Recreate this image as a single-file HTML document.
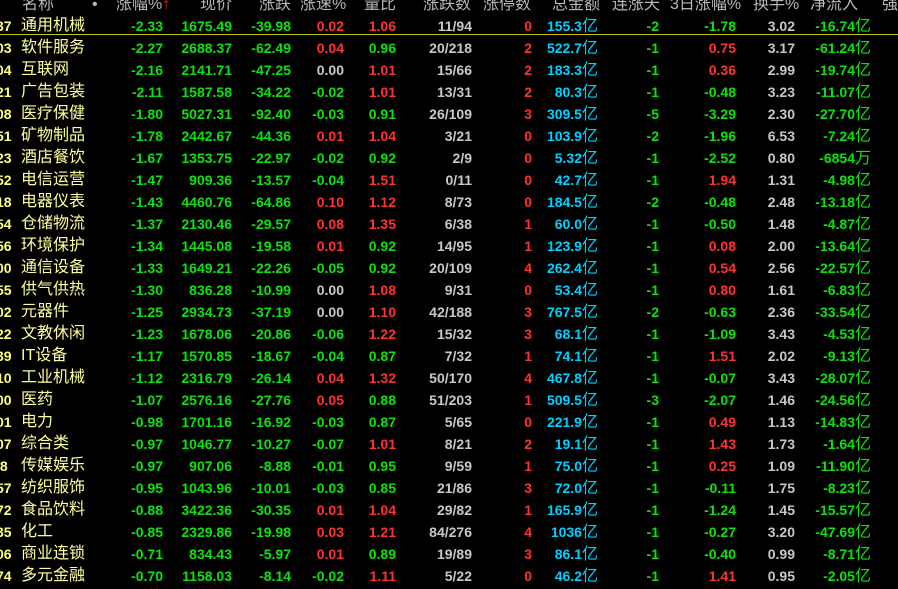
<!DOCTYPE html><html><head><meta charset="utf-8"><style>
body{margin:0;background:#000;width:898px;height:589px;overflow:hidden;position:relative;font-family:"Liberation Sans","Noto Sans CJK SC",sans-serif;font-size:14px}
.r{position:absolute;left:0;width:898px;height:22px;line-height:22px;margin-top:2px;font-weight:bold}
.r span{position:absolute;white-space:nowrap}
.a{left:-4px;color:#ffff80;font-weight:bold}
.n{left:21px;color:#ffff99;font-size:16px;font-weight:normal}
.b{right:735px;color:#10e010}.c{right:666px;color:#10e010}.d{right:607px;color:#10e010}
.e{right:554px}.f{right:502px}.g{right:426px;color:#c8c8c8}.h{right:366px;color:#ff3232}
.i{right:300px;color:#00d0ff}.j{right:239px;color:#10e010}.k{right:162px}.l{right:103px;color:#c8c8c8}.m{right:27px;color:#10e010}
.i i,.m i{font-style:normal;font-size:16px;font-weight:normal}
.R{color:#ff3232!important}.G{color:#10e010!important}.W{color:#c8c8c8!important}
.hd{position:absolute;top:-6px;color:#b8b8b8;font-size:16px;line-height:22px;white-space:nowrap}
</style></head><body>
<span class="hd" style="left:22px">名称</span><span class="hd" style="left:92px">•</span>
<span class="hd" style="left:116px">涨幅%<span style="color:#ff2020">↑</span></span>
<span class="hd" style="left:200px">现价</span><span class="hd" style="left:259px">涨跌</span>
<span class="hd" style="left:300px">涨速%</span><span class="hd" style="left:364px">量比</span>
<span class="hd" style="left:423px">涨跌数</span><span class="hd" style="left:483px">涨停数</span>
<span class="hd" style="left:552px">总金额</span><span class="hd" style="left:612px">连涨天</span>
<span class="hd" style="left:670px">3日涨幅%</span><span class="hd" style="left:753px">换手%</span>
<span class="hd" style="left:810px">净流入</span><span class="hd" style="left:882px">强</span>
<div style="position:absolute;top:34px;left:0;width:898px;height:1px;background:#c8c800"></div>

<div class="r" style="top:13px"><span class="a">37</span><span class="n">通用机械</span><span class="b">-2.33</span><span class="c">1675.49</span><span class="d">-39.98</span><span class="e R">0.02</span><span class="f R">1.06</span><span class="g">11/94</span><span class="h">0</span><span class="i">155.3<i>亿</i></span><span class="j">-2</span><span class="k G">-1.78</span><span class="l">3.02</span><span class="m">-16.74<i>亿</i></span></div>
<div class="r" style="top:35px"><span class="a">03</span><span class="n">软件服务</span><span class="b">-2.27</span><span class="c">2688.37</span><span class="d">-62.49</span><span class="e R">0.04</span><span class="f G">0.96</span><span class="g">20/218</span><span class="h">2</span><span class="i">522.7<i>亿</i></span><span class="j">-1</span><span class="k R">0.75</span><span class="l">3.17</span><span class="m">-61.24<i>亿</i></span></div>
<div class="r" style="top:57px"><span class="a">04</span><span class="n">互联网</span><span class="b">-2.16</span><span class="c">2141.71</span><span class="d">-47.25</span><span class="e W">0.00</span><span class="f R">1.01</span><span class="g">15/66</span><span class="h">2</span><span class="i">183.3<i>亿</i></span><span class="j">-1</span><span class="k R">0.36</span><span class="l">2.99</span><span class="m">-19.74<i>亿</i></span></div>
<div class="r" style="top:79px"><span class="a">21</span><span class="n">广告包装</span><span class="b">-2.11</span><span class="c">1587.58</span><span class="d">-34.22</span><span class="e G">-0.02</span><span class="f R">1.01</span><span class="g">13/31</span><span class="h">2</span><span class="i">80.3<i>亿</i></span><span class="j">-1</span><span class="k G">-0.48</span><span class="l">3.23</span><span class="m">-11.07<i>亿</i></span></div>
<div class="r" style="top:101px"><span class="a">08</span><span class="n">医疗保健</span><span class="b">-1.80</span><span class="c">5027.31</span><span class="d">-92.40</span><span class="e G">-0.03</span><span class="f G">0.91</span><span class="g">26/109</span><span class="h">3</span><span class="i">309.5<i>亿</i></span><span class="j">-5</span><span class="k G">-3.29</span><span class="l">2.30</span><span class="m">-27.70<i>亿</i></span></div>
<div class="r" style="top:123px"><span class="a">51</span><span class="n">矿物制品</span><span class="b">-1.78</span><span class="c">2442.67</span><span class="d">-44.36</span><span class="e R">0.01</span><span class="f R">1.04</span><span class="g">3/21</span><span class="h">0</span><span class="i">103.9<i>亿</i></span><span class="j">-2</span><span class="k G">-1.96</span><span class="l">6.53</span><span class="m">-7.24<i>亿</i></span></div>
<div class="r" style="top:145px"><span class="a">23</span><span class="n">酒店餐饮</span><span class="b">-1.67</span><span class="c">1353.75</span><span class="d">-22.97</span><span class="e G">-0.02</span><span class="f G">0.92</span><span class="g">2/9</span><span class="h">0</span><span class="i">5.32<i>亿</i></span><span class="j">-1</span><span class="k G">-2.52</span><span class="l">0.80</span><span class="m">-6854<i>万</i></span></div>
<div class="r" style="top:167px"><span class="a">52</span><span class="n">电信运营</span><span class="b">-1.47</span><span class="c">909.36</span><span class="d">-13.57</span><span class="e G">-0.04</span><span class="f R">1.51</span><span class="g">0/11</span><span class="h">0</span><span class="i">42.7<i>亿</i></span><span class="j">-1</span><span class="k R">1.94</span><span class="l">1.31</span><span class="m">-4.98<i>亿</i></span></div>
<div class="r" style="top:189px"><span class="a">18</span><span class="n">电器仪表</span><span class="b">-1.43</span><span class="c">4460.76</span><span class="d">-64.86</span><span class="e R">0.10</span><span class="f R">1.12</span><span class="g">8/73</span><span class="h">0</span><span class="i">184.5<i>亿</i></span><span class="j">-2</span><span class="k G">-0.48</span><span class="l">2.48</span><span class="m">-13.18<i>亿</i></span></div>
<div class="r" style="top:211px"><span class="a">54</span><span class="n">仓储物流</span><span class="b">-1.37</span><span class="c">2130.46</span><span class="d">-29.57</span><span class="e R">0.08</span><span class="f R">1.35</span><span class="g">6/38</span><span class="h">1</span><span class="i">60.0<i>亿</i></span><span class="j">-1</span><span class="k G">-0.50</span><span class="l">1.48</span><span class="m">-4.87<i>亿</i></span></div>
<div class="r" style="top:233px"><span class="a">56</span><span class="n">环境保护</span><span class="b">-1.34</span><span class="c">1445.08</span><span class="d">-19.58</span><span class="e R">0.01</span><span class="f G">0.92</span><span class="g">14/95</span><span class="h">1</span><span class="i">123.9<i>亿</i></span><span class="j">-1</span><span class="k R">0.08</span><span class="l">2.00</span><span class="m">-13.64<i>亿</i></span></div>
<div class="r" style="top:255px"><span class="a">00</span><span class="n">通信设备</span><span class="b">-1.33</span><span class="c">1649.21</span><span class="d">-22.26</span><span class="e G">-0.05</span><span class="f G">0.92</span><span class="g">20/109</span><span class="h">4</span><span class="i">262.4<i>亿</i></span><span class="j">-1</span><span class="k R">0.54</span><span class="l">2.56</span><span class="m">-22.57<i>亿</i></span></div>
<div class="r" style="top:277px"><span class="a">55</span><span class="n">供气供热</span><span class="b">-1.30</span><span class="c">836.28</span><span class="d">-10.99</span><span class="e W">0.00</span><span class="f R">1.08</span><span class="g">9/31</span><span class="h">0</span><span class="i">53.4<i>亿</i></span><span class="j">-1</span><span class="k R">0.80</span><span class="l">1.61</span><span class="m">-6.83<i>亿</i></span></div>
<div class="r" style="top:299px"><span class="a">02</span><span class="n">元器件</span><span class="b">-1.25</span><span class="c">2934.73</span><span class="d">-37.19</span><span class="e W">0.00</span><span class="f R">1.10</span><span class="g">42/188</span><span class="h">3</span><span class="i">767.5<i>亿</i></span><span class="j">-2</span><span class="k G">-0.63</span><span class="l">2.36</span><span class="m">-33.54<i>亿</i></span></div>
<div class="r" style="top:321px"><span class="a">22</span><span class="n">文教休闲</span><span class="b">-1.23</span><span class="c">1678.06</span><span class="d">-20.86</span><span class="e G">-0.06</span><span class="f R">1.22</span><span class="g">15/32</span><span class="h">3</span><span class="i">68.1<i>亿</i></span><span class="j">-1</span><span class="k G">-1.09</span><span class="l">3.43</span><span class="m">-4.53<i>亿</i></span></div>
<div class="r" style="top:343px"><span class="a">39</span><span class="n">IT设备</span><span class="b">-1.17</span><span class="c">1570.85</span><span class="d">-18.67</span><span class="e G">-0.04</span><span class="f G">0.87</span><span class="g">7/32</span><span class="h">1</span><span class="i">74.1<i>亿</i></span><span class="j">-1</span><span class="k R">1.51</span><span class="l">2.02</span><span class="m">-9.13<i>亿</i></span></div>
<div class="r" style="top:365px"><span class="a">10</span><span class="n">工业机械</span><span class="b">-1.12</span><span class="c">2316.79</span><span class="d">-26.14</span><span class="e R">0.04</span><span class="f R">1.32</span><span class="g">50/170</span><span class="h">4</span><span class="i">467.8<i>亿</i></span><span class="j">-1</span><span class="k G">-0.07</span><span class="l">3.43</span><span class="m">-28.07<i>亿</i></span></div>
<div class="r" style="top:387px"><span class="a">00</span><span class="n">医药</span><span class="b">-1.07</span><span class="c">2576.16</span><span class="d">-27.76</span><span class="e R">0.05</span><span class="f G">0.88</span><span class="g">51/203</span><span class="h">1</span><span class="i">509.5<i>亿</i></span><span class="j">-3</span><span class="k G">-2.07</span><span class="l">1.46</span><span class="m">-24.56<i>亿</i></span></div>
<div class="r" style="top:409px"><span class="a">01</span><span class="n">电力</span><span class="b">-0.98</span><span class="c">1701.16</span><span class="d">-16.92</span><span class="e G">-0.03</span><span class="f G">0.87</span><span class="g">5/65</span><span class="h">0</span><span class="i">221.9<i>亿</i></span><span class="j">-1</span><span class="k R">0.49</span><span class="l">1.13</span><span class="m">-14.83<i>亿</i></span></div>
<div class="r" style="top:431px"><span class="a">07</span><span class="n">综合类</span><span class="b">-0.97</span><span class="c">1046.77</span><span class="d">-10.27</span><span class="e G">-0.07</span><span class="f R">1.01</span><span class="g">8/21</span><span class="h">2</span><span class="i">19.1<i>亿</i></span><span class="j">-1</span><span class="k R">1.43</span><span class="l">1.73</span><span class="m">-1.64<i>亿</i></span></div>
<div class="r" style="top:453px"><span class="a">&nbsp;8</span><span class="n">传媒娱乐</span><span class="b">-0.97</span><span class="c">907.06</span><span class="d">-8.88</span><span class="e G">-0.01</span><span class="f G">0.95</span><span class="g">9/59</span><span class="h">1</span><span class="i">75.0<i>亿</i></span><span class="j">-1</span><span class="k R">0.25</span><span class="l">1.09</span><span class="m">-11.90<i>亿</i></span></div>
<div class="r" style="top:475px"><span class="a">57</span><span class="n">纺织服饰</span><span class="b">-0.95</span><span class="c">1043.96</span><span class="d">-10.01</span><span class="e G">-0.03</span><span class="f G">0.85</span><span class="g">21/86</span><span class="h">3</span><span class="i">72.0<i>亿</i></span><span class="j">-1</span><span class="k G">-0.11</span><span class="l">1.75</span><span class="m">-8.23<i>亿</i></span></div>
<div class="r" style="top:497px"><span class="a">72</span><span class="n">食品饮料</span><span class="b">-0.88</span><span class="c">3422.36</span><span class="d">-30.35</span><span class="e R">0.01</span><span class="f R">1.04</span><span class="g">29/82</span><span class="h">1</span><span class="i">165.9<i>亿</i></span><span class="j">-1</span><span class="k G">-1.24</span><span class="l">1.45</span><span class="m">-15.57<i>亿</i></span></div>
<div class="r" style="top:519px"><span class="a">35</span><span class="n">化工</span><span class="b">-0.85</span><span class="c">2329.86</span><span class="d">-19.98</span><span class="e R">0.03</span><span class="f R">1.21</span><span class="g">84/276</span><span class="h">4</span><span class="i">1036<i>亿</i></span><span class="j">-1</span><span class="k G">-0.27</span><span class="l">3.20</span><span class="m">-47.69<i>亿</i></span></div>
<div class="r" style="top:541px"><span class="a">06</span><span class="n">商业连锁</span><span class="b">-0.71</span><span class="c">834.43</span><span class="d">-5.97</span><span class="e R">0.01</span><span class="f G">0.89</span><span class="g">19/89</span><span class="h">3</span><span class="i">86.1<i>亿</i></span><span class="j">-1</span><span class="k G">-0.40</span><span class="l">0.99</span><span class="m">-8.71<i>亿</i></span></div>
<div class="r" style="top:563px"><span class="a">74</span><span class="n">多元金融</span><span class="b">-0.70</span><span class="c">1158.03</span><span class="d">-8.14</span><span class="e G">-0.02</span><span class="f R">1.11</span><span class="g">5/22</span><span class="h">0</span><span class="i">46.2<i>亿</i></span><span class="j">-1</span><span class="k R">1.41</span><span class="l">0.95</span><span class="m">-2.05<i>亿</i></span></div>
</body></html>
